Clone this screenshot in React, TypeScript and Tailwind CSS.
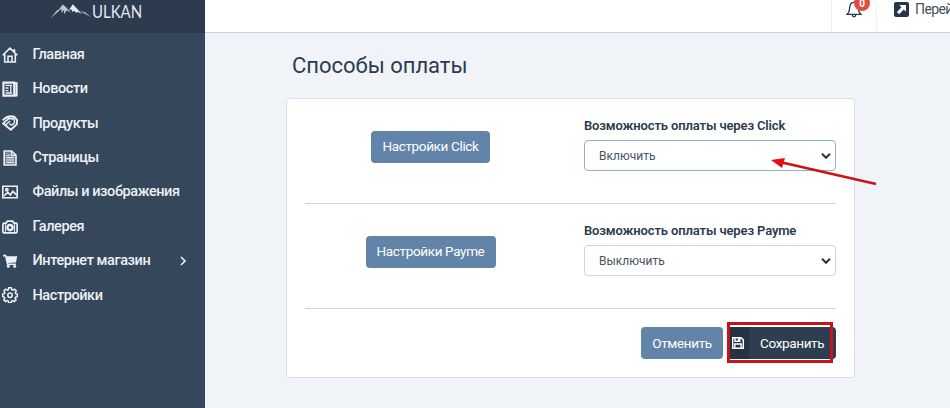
import { useState } from "react";
import type { ReactNode } from "react";

interface MenuItem {
  title: string;
  icon: ReactNode;
  hasChildren?: boolean;
}

interface PaymentSelectProps {
  label: string;
  value: string;
  active?: boolean;
  onChange: (value: string) => void;
}

function Icon({ children }: { children: ReactNode }) {
  return (
    <svg
      className="h-4 w-4 shrink-0"
      viewBox="0 0 16 16"
      fill="none"
      stroke="currentColor"
      strokeWidth="1.6"
    >
      {children}
    </svg>
  );
}

const menu: MenuItem[] = [
  {
    title: "Главная",
    icon: (
      <Icon>
        <path d="M.7 8.3 8 1.2l7.3 7.1M2.7 7v8h10.6V7M6 15V9.2h4V15M12.4 5V2" />
      </Icon>
    ),
  },
  {
    title: "Новости",
    icon: (
      <Icon>
        <path d="M1.4 1.6h10.8v13H1.4zM13 2.2h1.6v12.2H12" strokeWidth="2.1" />
        <path d="M3.5 4.3h6.6M3.5 9.6h3M3.5 12h6.6M8.8 4v8M3.5 7h3" strokeWidth="1.3" />
      </Icon>
    ),
  },
  {
    title: "Продукты",
    icon: (
      <Icon>
        <path d="M.6 5.4C3.6 2.2 8.4.8 12.2 1.6l2.9 3.6-.3 4-6 5.6L1.2 8.4 7 3.4l5.2.4" strokeWidth="1.9" />
        <path d="m3.4 10 4.8-4M10.3 3.2c2.8 1.4 3 4.6.6 6.2-1.4 1-3 .4-3.4-.8" strokeWidth="1.5" />
      </Icon>
    ),
  },
  {
    title: "Страницы",
    icon: (
      <Icon>
        <path d="M2.2 1h7.4L14 5.2V15H2.2z" fill="currentColor" fillOpacity=".35" strokeWidth="1.6" />
        <path d="M9.4 1v4.4H14M4.3 7.6h7.6M4.3 10h7.6M4.3 12.4h7.6M4.3 5.2H8" strokeWidth="1.1" />
      </Icon>
    ),
  },
  {
    title: "Файлы и изображения",
    icon: (
      <Icon>
        <path d="M.8 2.3h14.4v11.4H.8z" />
        <path d="m2 11.8 3.8-3.4 2.6 2.5 2.5-3.6 3.8 3.8" />
        <circle cx="4.8" cy="5.8" r="1.2" />
      </Icon>
    ),
  },
  {
    title: "Галерея",
    icon: (
      <Icon>
        <path d="M2 4.2h2.1l1.2-2h5.4l1.2 2H14q1.1 0 1.1 1.1v7.4q0 1.1-1.1 1.1H2q-1.1 0-1.1-1.1V5.300Q.9 4.200 2 4.200z" strokeWidth="1.7" />
        <path d="M3.400 5v8M12.600 5v8" strokeWidth="1" />
        <circle cx="8" cy="8.600" r="2.600" strokeWidth="2.400" />
      </Icon>
    ),
  },
  {
    title: "Интернет магазин",
    hasChildren: true,
    icon: (
      <Icon>
        <path d="M1 2.6h2.6l2 8.6h8.2" />
        <path d="M4 3.2h11.2L14 9.4 5.4 10z" fill="currentColor" stroke="none" />
        <circle cx="6.3" cy="13.2" r="1.5" fill="currentColor" stroke="none" />
        <circle cx="12.7" cy="13.2" r="1.5" fill="currentColor" stroke="none" />
      </Icon>
    ),
  },
  {
    title: "Настройки",
    icon: (
      <Icon>
        <path
          d="M6.7.8h2.6l.4 1.9 1.1.5 1.7-1.1 1.8 1.8-1.1 1.7.5 1.1 1.6.3v2.6l-1.7.5-.5 1.1 1 1.6-1.8 1.8-1.6-1-1.1.5-.4 1.7H6.7l-.4-1.7-1.1-.5-1.6 1-1.8-1.8 1-1.6-.5-1.1-1.6-.5V7l1.7-.3.5-1.1-1-1.7 1.7-1.8 1.7 1.1 1.1-.5z"
          strokeWidth="1.5"
        />
        <circle cx="8" cy="8.2" r="2.2" strokeWidth="1.5" />
      </Icon>
    ),
  },
];

function Logo() {
  return (
    <div className="flex h-[33px] shrink-0 bg-[#2c3b4e] pl-[51px] text-[#e6eaf0]">
      <svg className="mt-[3px] h-4 w-10 shrink-0" viewBox="0 0 40 16" fill="currentColor">
        <path d="M0 15 5.5 7.8 8 6.5l3.6-5 3 2.3L20 10l-4.5-2.8-2.1 4-.8-4.5-1.8 3.6-.5-4.6-2.4 2.2L5 10.4z" opacity=".8" />
        <path d="m18 7 3.8-5.8L31 11l-4-2-1.8.8-2.2-2-1.7 1.1-.8-2.4z" />
        <path d="m29 8 5 1 6 5.2-6.5-3.5z" opacity=".65" />
      </svg>
      <span className="mt-[3px] ml-px origin-left scale-x-[0.88] font-['Lato'] text-[17px] leading-[18px]">
        ULKAN
      </span>
    </div>
  );
}

function Sidebar() {
  return (
    <aside className="flex w-[205px] shrink-0 flex-col bg-[#34475b] text-[#edf0f5]">
      <Logo />
      <nav className="flex flex-col pt-[4.5px]">
        {menu.map((item) => (
          <a
            key={item.title}
            href="#"
            className="flex h-[34.4px] items-center gap-[14.5px] pr-[18px] pl-0.5 text-[14.5px] font-medium tracking-[-0.42px] whitespace-nowrap"
          >
            {item.icon}
            <span>{item.title}</span>
            {item.hasChildren && (
              <svg className="ml-auto h-2.5 w-2" viewBox="0 0 8 10" fill="none" stroke="currentColor" strokeWidth="1.6">
                <path d="m2 1 4 4-4 4" />
              </svg>
            )}
          </a>
        ))}
      </nav>
    </aside>
  );
}

function TopBar() {
  return (
    <header className="flex h-[33px] shrink-0 justify-end border-b border-[#ccd3db] bg-white">
      <button className="relative w-[46px] border-x border-[#f0f2f5]">
        <svg
          className="absolute top-0 left-3.5 h-[18px] w-4"
          viewBox="0 0 16 18"
          fill="none"
          stroke="#2c3b4e"
          strokeWidth="1.3"
        >
          <path d="M1 14.3c2.6-1.6 2.4-4 2.7-7C4 4 5.4 2.4 8 2.4s4 1.6 4.3 4.9c.3 3 .1 5.4 2.7 7zM6.2 14.8c.3 2.6 3.3 2.6 3.6 0" />
        </svg>
        <span className="absolute -top-[5px] left-[22px] flex h-4 w-4 items-center justify-center rounded-full bg-[#e24c40] text-[10px] font-bold text-white">
          0
        </span>
      </button>
      <a href="#" className="flex w-[73px] gap-[7px] pl-4 text-[14px] leading-[18px] tracking-[-0.6px] text-[#46505b]">
        <svg className="mt-0.5 ml-px h-[15px] w-[15px] shrink-0" viewBox="0 0 15 15">
          <rect width="15" height="15" rx="2" fill="#25364a" />
          <path d="M5.2 3H12v6.8L9.8 7.6l-4.6 4.6-2.3-2.3 4.6-4.6z" fill="#fff" />
        </svg>
        <span className="-ml-px whitespace-nowrap">Перей</span>
      </a>
    </header>
  );
}

function PaymentSelect({ label, value, active, onChange }: PaymentSelectProps) {
  return (
    <label className="flex w-[252px] flex-col">
      <span className="h-5 text-[13px] leading-5 font-semibold tracking-[-0.14px] whitespace-nowrap text-[#2c3b4e]">
        {label}
      </span>
      <span className="relative mt-1 block">
        <select
          value={value}
          onChange={(event) => onChange(event.target.value)}
          className={
            active
              ? "h-[31px] w-full appearance-none rounded-[4px] border border-[#8fb1cb] bg-white px-[14px] pt-px text-xs text-[#49535e]"
              : "h-[31px] w-full appearance-none rounded-[4px] border border-[#d0d4d9] bg-white px-[14px] pt-px text-xs text-[#49535e]"
          }
        >
          <option value="on">Включить</option>
          <option value="off">Выключить</option>
        </select>
        <svg
          className="pointer-events-none absolute top-[13px] right-[5px] h-1.5 w-2.5"
          viewBox="0 0 10 6"
          fill="none"
          stroke="#2b333c"
          strokeWidth="2"
        >
          <path d="m1 .8 4 4 4-4" />
        </svg>
      </span>
    </label>
  );
}

function App() {
  const [click, setClick] = useState("on");
  const [payme, setPayme] = useState("off");

  return (
    <div className="relative flex h-[408px] w-[950px] overflow-hidden bg-[#f0f4f8] font-['Roboto',sans-serif]">
      <Sidebar />
      <div className="flex flex-1 flex-col">
        <TopBar />
        <main className="pl-[81px]">
          <h1 className="mt-[18px] ml-[6px] text-[22px] leading-[30px] tracking-[-0.02px] text-[#2c3b4e]">
            Способы оплаты
          </h1>
          <section className="mt-[17px] h-[280px] w-[569px] rounded-[4px] border border-[#dadfe7] bg-white px-[18px]">
            <div className="flex h-[105px] justify-between border-b border-[#ccd1da] pt-[17px]">
              <div className="flex w-[251px] justify-center pt-[14.5px]">
                <button className="h-8 w-[119px] rounded-[4px] bg-[#6284a8] text-[13.5px] tracking-[-0.35px] whitespace-nowrap text-white">
                  Настройки Click
                </button>
              </div>
              <PaymentSelect label="Возможность оплаты через Click" value={click} active onChange={setClick} />
            </div>
            <div className="flex h-[105px] justify-between border-b border-[#ccd1da] pt-[17px]">
              <div className="flex w-[251px] justify-center pt-[14.5px]">
                <button className="h-8 w-[130px] rounded-[4px] bg-[#6284a8] text-[13.5px] tracking-[-0.35px] whitespace-nowrap text-white">
                  Настройки Payme
                </button>
              </div>
              <PaymentSelect label="Возможность оплаты через Payme" value={payme} onChange={setPayme} />
            </div>
            <div className="flex justify-end gap-1 pt-[18px]">
              <button className="h-8 w-[82px] rounded-[4px] bg-[#6284a8] text-[13.5px] tracking-[-0.35px] text-white">
                Отменить
              </button>
              <button className="flex h-8 w-[109px] items-center overflow-hidden rounded-[4px] bg-[#2e3e51] text-[13.5px] tracking-[-0.35px] text-white">
                <span className="flex h-full w-[22px] items-center justify-center bg-[#253243]">
                  <svg className="h-3 w-3" viewBox="0 0 12 12" fill="none" stroke="currentColor" strokeWidth="1.4">
                    <path d="M.7.7h8.4l2.2 2.2v8.4H.7zM2.8 11V7h6.4v4M3 .8v3.4h4.8V.8" />
                    <path d="M6.5 1v3" />
                  </svg>
                </span>
                <span className="ml-[11px]">Сохранить</span>
              </button>
            </div>
          </section>
        </main>
      </div>
      <div className="pointer-events-none absolute top-[322px] left-[727px] h-[41px] w-[106px] border-3 border-[#c5151c]" />
      <svg className="pointer-events-none absolute top-[154px] left-[768px] h-8 w-[112px]" viewBox="0 0 112 32">
        <path d="M14 8.4 108 30" stroke="#cf1116" strokeWidth="2.6" />
        <path d="m3 6 14-2-3 10z" fill="#e80d12" />
      </svg>
    </div>
  );
}

export default App;
